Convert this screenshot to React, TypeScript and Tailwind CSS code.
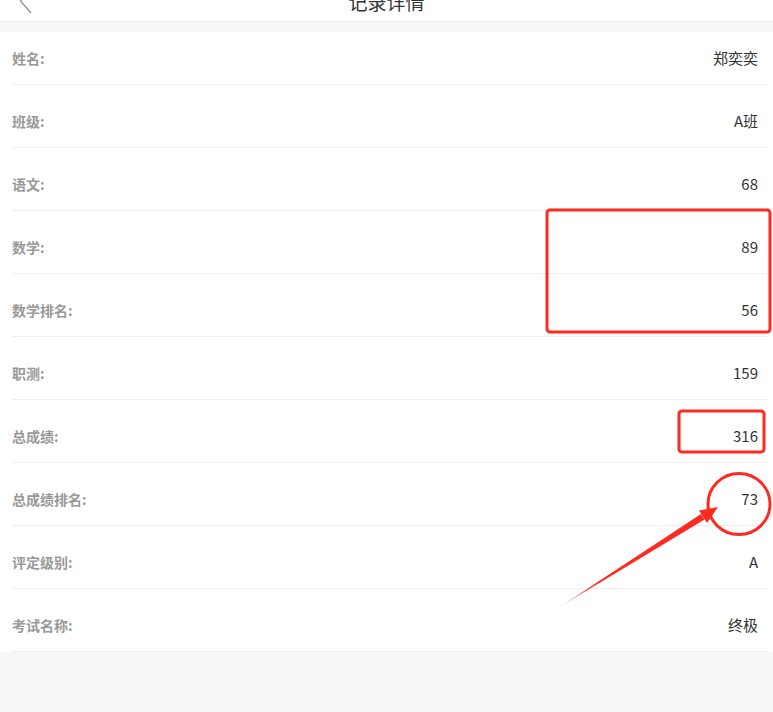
const rows = [
  { label: "姓名:", value: "郑奕奕" },
  { label: "班级:", value: "A班" },
  { label: "语文:", value: "68" },
  { label: "数学:", value: "89" },
  { label: "数学排名:", value: "56" },
  { label: "职测:", value: "159" },
  { label: "总成绩:", value: "316" },
  { label: "总成绩排名:", value: "73" },
  { label: "评定级别:", value: "A" },
  { label: "考试名称:", value: "终极" },
];

function Annotations() {
  return (
    <svg
      className="pointer-events-none absolute left-0 top-0"
      width="773"
      height="712"
      viewBox="0 0 773 712"
    >
      <defs>
        <linearGradient id="tail" x1="558" y1="608" x2="718" y2="507" gradientUnits="userSpaceOnUse">
          <stop offset="0" stopColor="#ff2a1f" stopOpacity="0.2" />
          <stop offset="0.25" stopColor="#ff2a1f" />
          <stop offset="1" stopColor="#ff2a1f" />
        </linearGradient>
      </defs>
      <rect x="547" y="210" width="223" height="122" rx="3" fill="none" stroke="#ff2a1f" strokeWidth="3" />
      <rect x="679" y="411" width="85" height="41" rx="3" fill="none" stroke="#ff2a1f" strokeWidth="3" />
      <ellipse cx="739" cy="504" rx="31" ry="30.5" fill="none" stroke="#ff2a1f" strokeWidth="3" />
      <polygon points="558,608 701,514 704.5,519.5" fill="url(#tail)" />
      <polygon points="718,507 699,510.5 707,523" fill="#ff2a1f" />
    </svg>
  );
}

export default function App() {
  return (
    <div
      className="relative min-h-[712px] w-full bg-[#f7f7f7]"
      style={{ fontFamily: '"Noto Sans CJK SC", "Noto Sans", sans-serif' }}
    >
      <header className="relative flex h-[22px] items-end justify-center overflow-hidden border-b border-[#eee] bg-white">
        <svg className="absolute left-[19px] top-[-12px]" width="14" height="26" viewBox="0 0 14 26">
          <polyline points="12,1 1.5,13 12,25" fill="none" stroke="#9a9a9a" strokeWidth="1.5" />
        </svg>
        <span className="pb-[10px] text-[19px] leading-none text-[#333]">记录详情</span>
      </header>

      <section className="mt-[10px] bg-white">
        {rows.map((row, i) => (
          <div
            key={row.label}
            className={`ml-3 mr-[5px] flex items-end justify-between border-b border-[#eee] pb-4 pr-[10px] ${
              i === 0 ? "h-[53px]" : "h-[63px]"
            }`}
          >
            <span className="text-[14px] font-bold leading-5 text-[#999]">{row.label}</span>
            <span className="text-[15px] leading-5 text-[#333]">{row.value}</span>
          </div>
        ))}
      </section>

      <Annotations />
    </div>
  );
}
